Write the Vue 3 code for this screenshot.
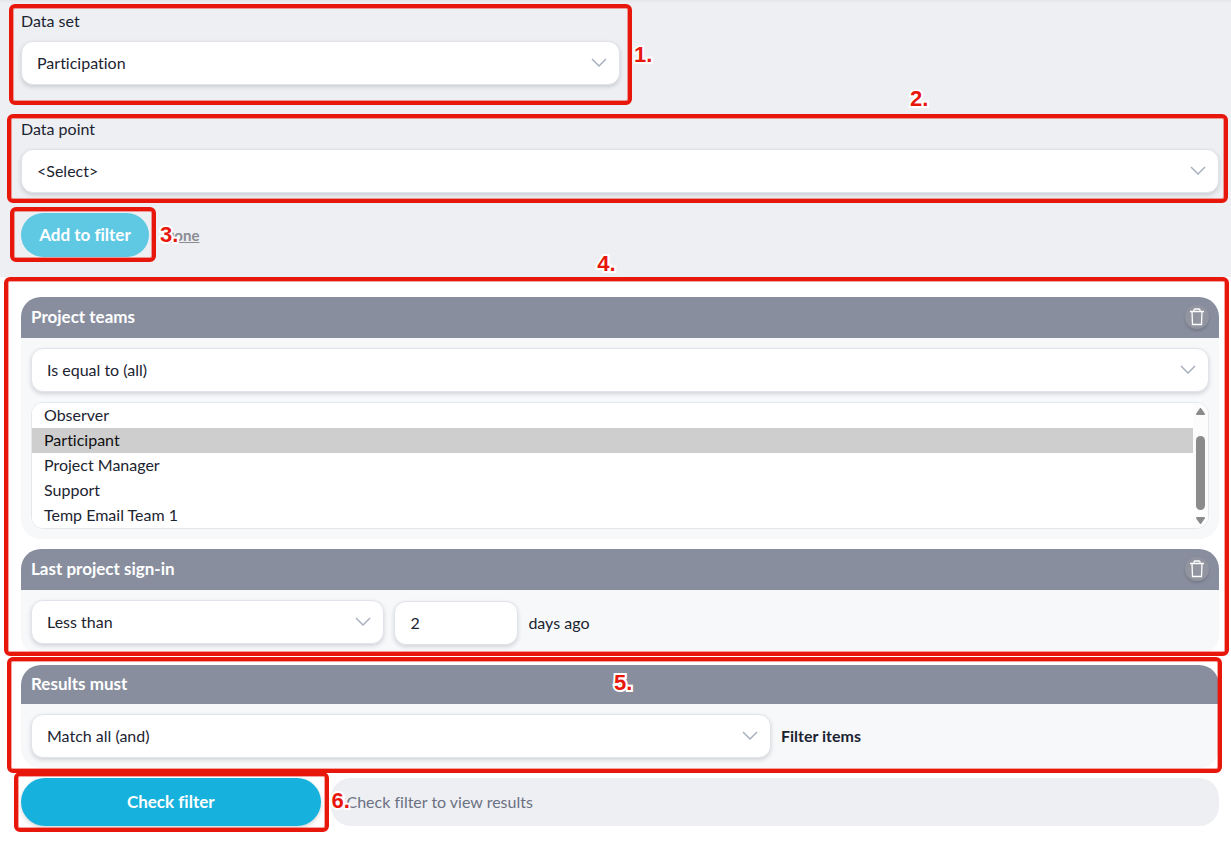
<script setup>
import { ref } from 'vue'

const teams = ['Observer', 'Participant', 'Project Manager', 'Support', 'Temp Email Team 1']
const selectedTeams = ref(['Participant'])
const days = ref('2')
</script>

<template>
  <main class="page">
    <section class="builder">
      <div class="group field half">
        <label for="data-set">Data set</label>
        <div class="select">
          <select id="data-set"><option>Participation</option></select>
          <svg viewBox="0 0 16 9" aria-hidden="true"><path d="M1 1l7 7 7-7" /></svg>
        </div>
        <span class="frame frame-1"></span>
        <span class="mark mark-1">1.</span>
      </div>

      <div class="group field">
        <label for="data-point">Data point</label>
        <div class="select">
          <select id="data-point"><option>&lt;Select&gt;</option></select>
          <svg viewBox="0 0 16 9" aria-hidden="true"><path d="M1 1l7 7 7-7" /></svg>
        </div>
        <span class="frame frame-2"></span>
        <span class="mark mark-2">2.</span>
      </div>

      <div class="actions">
        <div class="group">
          <button type="button" class="button add">Add to filter</button>
          <span class="frame frame-3"></span>
          <span class="mark mark-3">3.</span>
        </div>
        <a href="#" class="done">Done</a>
      </div>
    </section>

    <section class="filters">
      <div class="group stack">
        <article class="card">
          <header>
            <h2>Project teams</h2>
            <button type="button" class="trash" aria-label="Remove Project teams">
              <svg viewBox="0 0 16 18" aria-hidden="true"><path d="M1 3.500h14M5 3.500v-1.500q0-1 1-1h4q1 0 1 1v1.500M3 3.500l.5 13h9l.5-13" /></svg>
            </button>
          </header>
          <div class="body column">
            <div class="select">
              <select aria-label="Project teams condition"><option>Is equal to (all)</option></select>
              <svg viewBox="0 0 16 9" aria-hidden="true"><path d="M1 1l7 7 7-7" /></svg>
            </div>
            <div class="list">
              <select v-model="selectedTeams" multiple size="5" aria-label="Teams">
                <option v-for="team in teams" :key="team">{{ team }}</option>
              </select>
              <div class="scrollbar" aria-hidden="true">
                <svg viewBox="0 0 9 7"><path d="M4.500 1L8 6H1z" /></svg>
                <span class="thumb"></span>
                <svg viewBox="0 0 9 7"><path d="M4.500 6L8 1H1z" /></svg>
              </div>
            </div>
          </div>
        </article>

        <article class="card">
          <header>
            <h2>Last project sign-in</h2>
            <button type="button" class="trash" aria-label="Remove Last project sign-in">
              <svg viewBox="0 0 16 18" aria-hidden="true"><path d="M1 3.500h14M5 3.500v-1.500q0-1 1-1h4q1 0 1 1v1.500M3 3.500l.5 13h9l.5-13" /></svg>
            </button>
          </header>
          <div class="body row sign-in">
            <div class="select compare">
              <select aria-label="Last project sign-in condition"><option>Less than</option></select>
              <svg viewBox="0 0 16 9" aria-hidden="true"><path d="M1 1l7 7 7-7" /></svg>
            </div>
            <input id="days" v-model="days" type="text" inputmode="numeric" />
            <label for="days">days ago</label>
          </div>
        </article>
        <span class="frame frame-4"></span>
        <span class="mark mark-4">4.</span>
      </div>

      <div class="group">
        <article class="card">
          <header class="slim"><h2>Results must</h2></header>
          <div class="body row">
            <div class="select match">
              <select id="match"><option>Match all (and)</option></select>
              <svg viewBox="0 0 16 9" aria-hidden="true"><path d="M1 1l7 7 7-7" /></svg>
            </div>
            <label for="match" class="strong">Filter items</label>
          </div>
        </article>
        <span class="frame frame-5"></span>
        <span class="mark mark-5">5.</span>
      </div>

      <div class="check-row">
        <div class="group quarter">
          <button type="button" class="button check">Check filter</button>
          <span class="frame frame-6"></span>
          <span class="mark mark-6">6.</span>
        </div>
        <p class="results">Check filter to view results</p>
      </div>
    </section>
  </main>
</template>

<style>
body {
  background: #fff;
}
</style>

<style scoped>
.page,
.page * {
  box-sizing: border-box;
}
.page {
  color: #1c2431;
  font: 16px/22px Lato, "Liberation Sans", sans-serif;
  font-variant-ligatures: none;
}
.page select,
.page input,
.page button {
  font: inherit;
  font-variant-ligatures: none;
  color: inherit;
  margin: 0;
}
.builder {
  padding: 10px 12px 20px 21px;
  background: #edeff3;
  box-shadow: inset 0 3px 3px -2px rgba(0, 0, 0, 0.06);
}
.filters {
  display: flex;
  flex-direction: column;
  gap: 10px;
  padding: 20px 12px 18px 21px;
}
.group {
  position: relative;
}
.field {
  display: flex;
  flex-direction: column;
  gap: 9px;
}
.half {
  width: 50%;
  margin-bottom: 33px;
}
.stack,
.column {
  display: flex;
  flex-direction: column;
  gap: 10px;
}
.select {
  position: relative;
}
.select select,
.row input {
  display: block;
  width: 100%;
  height: 44px;
  padding: 0 15px 1px;
  appearance: none;
  background: #fff;
  border: 1px solid #e0e3e9;
  border-radius: 12px;
  box-shadow: 0 2px 4px rgba(20, 25, 40, 0.16);
}
.select svg {
  position: absolute;
  top: 17px;
  right: 13px;
  width: 16px;
  height: 9px;
  fill: none;
  stroke: #a9b1c1;
  stroke-width: 1.500;
  pointer-events: none;
}
.actions {
  display: flex;
  align-items: center;
  gap: 14px;
  margin-top: 20px;
}
.button {
  display: block;
  border: 0;
  text-align: center;
}
.page .button {
  padding: 0;
  color: #fff;
  font-size: 17px;
  font-weight: 700;
}
.add {
  width: 128px;
  height: 44px;
  border-radius: 22px;
  background: #5fc9e4;
}
.done {
  color: #8b8c92;
  font-size: 15px;
  font-weight: 700;
}
.card {
  background: #f7f8fa;
  border-radius: 20px;
  overflow: hidden;
}
.card header {
  display: flex;
  align-items: center;
  justify-content: space-between;
  height: 41px;
  padding: 0 10px 1px;
  background: #888e9e;
  color: #fff;
}
.card .slim {
  height: 39px;
}
.card h2 {
  margin: 0;
  font-size: 17px;
  line-height: 22px;
  font-weight: 700;
}
.trash {
  display: grid;
  place-items: center;
  width: 24px;
  height: 24px;
  padding: 0;
  border: 0;
  border-radius: 50%;
  background: #92959f;
  box-shadow: 0 2px 3px rgba(0, 0, 0, 0.14);
}
.trash svg {
  width: 16px;
  height: 18px;
  fill: none;
  stroke: #fff;
  stroke-width: 1.300;
}
.body {
  padding: 10px;
}
.list {
  display: flex;
  background: #fff;
  border: 1px solid #e3e6eb;
  border-radius: 12px;
  overflow: hidden;
}
.list select {
  flex: 1;
  min-width: 0;
  height: 125px;
  padding: 0;
  border: 0;
  outline: 0;
  background: #fff;
  overflow: hidden;
  scrollbar-width: none;
}
.list option {
  height: 25px;
  min-height: 25px;
  padding: 2px 12px 0;
  line-height: 23px;
}
.list option:checked {
  background: #cecece;
}
.scrollbar {
  display: flex;
  flex-direction: column;
  align-items: center;
  width: 15px;
  padding: 5px 0 4px;
  background: #fcfcfc;
}
.scrollbar svg {
  width: 9px;
  height: 7px;
  fill: #8b8b8b;
  stroke: #8b8b8b;
  stroke-width: 2;
  stroke-linejoin: round;
}
.thumb {
  flex: 1;
  width: 9px;
  margin: 21px 0 7px;
  border-radius: 5px;
  background: #8b8b8b;
}
.row {
  display: flex;
  align-items: center;
  gap: 10px;
}
.sign-in {
  height: 65px;
}
.sign-in .select {
  align-self: flex-start;
}
.compare {
  flex: 0 0 30%;
}
.row input {
  width: 124px;
}
.match {
  flex: 0 1 740px;
}
.strong {
  font-weight: 700;
}
.check-row {
  display: flex;
  gap: 10px;
}
.quarter {
  flex: 0 0 25%;
}
.check {
  width: 100%;
  height: 48px;
  border-radius: 24px;
  background: #16b2dd;
  box-shadow: 0 2px 4px rgba(0, 0, 0, 0.16);
}
.results {
  flex: 1;
  margin: 0;
  padding: 13px 16px;
  border-radius: 20px;
  background: #edeff3;
  color: #6b7182;
}

/* Numbered callouts drawn over the form */
.frame {
  position: absolute;
  z-index: 2;
  border: 4px solid #e8170b;
  border-radius: 6px;
  box-shadow: inset 0 0 0 1px rgba(232, 23, 11, 0.4);
  pointer-events: none;
}
.frame-1 { inset: -6px -12px -20px -12px; }
.frame-2 { inset: -4px -9px -10px -14px; }
.frame-3 { inset: -6px -7px -5px -11px; }
.frame-4 { inset: -20px -10px -1px -17px; }
.frame-5 { inset: -8px -3px -5px -14px; }
.frame-6 { inset: -6px -8px -6px -7px; }
.mark {
  position: absolute;
  z-index: 3;
  color: #e8170b;
  font: 700 22px/24px "Liberation Sans", Arial, sans-serif;
  -webkit-text-stroke: 4px #fff;
  paint-order: stroke fill;
  pointer-events: none;
}
.mark-1 { top: 33px; left: calc(100% + 14px); }
.mark-2 { top: -31px; left: 74.2%; }
.mark-3 { top: 10px; left: calc(100% + 11px); }
.mark-4 { top: -45px; left: 48.1%; }
.mark-5 { top: 6px; left: 49.5%; }
.mark-6 { top: 11px; left: calc(100% + 11px); }
</style>
